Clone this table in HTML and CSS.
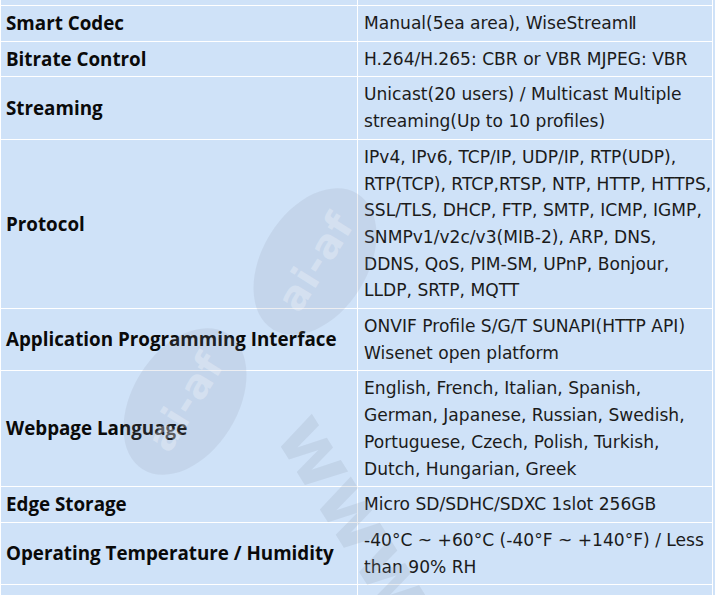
FILE: index.html
```html
<!DOCTYPE html>
<html>
<head>
<meta charset="utf-8">
<link rel="stylesheet" href="styles.css">
</head>
<body>
<div class="page">
<table class="spec">
  <colgroup><col class="c1"><col class="c2"></colgroup>
  <tr class="cut"><th></th><td></td></tr>
  <tr><th>Smart Codec</th><td>Manual(5ea area), WiseStreamⅡ</td></tr>
  <tr><th>Bitrate Control</th><td>H.264/H.265: CBR or VBR MJPEG: VBR</td></tr>
  <tr><th>Streaming</th><td>Unicast(20 users) / Multicast Multiple<br>streaming(Up to 10 profiles)</td></tr>
  <tr><th>Protocol</th><td>IPv4, IPv6, TCP/IP, UDP/IP, RTP(UDP),<br>RTP(TCP), RTCP,RTSP, NTP, HTTP, HTTPS,<br>SSL/TLS, DHCP, FTP, SMTP, ICMP, IGMP,<br>SNMPv1/v2c/v3(MIB-2), ARP, DNS,<br>DDNS, QoS, PIM-SM, UPnP, Bonjour,<br>LLDP, SRTP, MQTT</td></tr>
  <tr><th>Application Programming Interface</th><td>ONVIF Profile S/G/T SUNAPI(HTTP API)<br>Wisenet open platform</td></tr>
  <tr><th>Webpage Language</th><td>English, French, Italian, Spanish,<br>German, Japanese, Russian, Swedish,<br>Portuguese, Czech, Polish, Turkish,<br>Dutch, Hungarian, Greek</td></tr>
  <tr><th>Edge Storage</th><td>Micro SD/SDHC/SDXC 1slot 256GB</td></tr>
  <tr><th>Operating Temperature / Humidity</th><td>-40°C ~ +60°C (-40°F ~ +140°F) / Less<br>than 90% RH</td></tr>
  <tr class="cut"><th></th><td></td></tr>
</table>
<div class="wm wm-a"><span>ai-af</span></div>
<div class="wm wm-b"><span>ai-af</span></div>
<div class="wm-www">www</div>
</div>
</body>
</html>
```
FILE: styles.css
```css
html, body {
  margin: 0;
  padding: 0;
  background: #cfe2f8;
}
.page {
  width: 715px;
  height: 626px;
  overflow: hidden;
  position: relative;
  margin-top: -31px;
}
.spec {
  border-collapse: collapse;
  width: 713px;
  table-layout: fixed;
  font-family: "DejaVu Sans", sans-serif;
  font-size: 17.1px;
  line-height: 26.7px;
  color: #1b1b1b;
  background: #cfe2f8;
}
.c1 { width: 357px; }
.spec th, .spec td {
  border: 1px solid #ffffff;
  padding: 4px 5px;
  vertical-align: middle;
  text-align: left;
  white-space: nowrap;
}
.spec td { padding-left: 6px; overflow: hidden; }
.spec th {
  font-family: "Open Sans", sans-serif;
  font-size: 18.8px;
  font-weight: 700;
  color: #0a0a0a;
}
.spec .cut th, .spec .cut td { height: 27px; }

.wm {
  position: absolute;
  width: 160px;
  height: 105px;
  border-radius: 50%;
  background: rgba(140, 150, 165, 0.16);
  display: flex;
  align-items: center;
  justify-content: center;
  transform: rotate(-58deg);
  pointer-events: none;
}
.wm span {
  font-family: "DejaVu Sans", sans-serif;
  font-weight: 700;
  font-size: 40px;
  color: rgba(255, 255, 255, 0.28);
  letter-spacing: 1px;
}
.wm-a { left: 235px; top: 240px; }
.wm-b { left: 105px; top: 380px; }
.wm-www {
  position: absolute;
  left: 330px;
  top: 430px;
  font-family: "DejaVu Sans", sans-serif;
  font-weight: 700;
  font-size: 80px;
  line-height: 1;
  color: rgba(140, 150, 165, 0.18);
  transform: rotate(58deg);
  transform-origin: left top;
  pointer-events: none;
}
```
